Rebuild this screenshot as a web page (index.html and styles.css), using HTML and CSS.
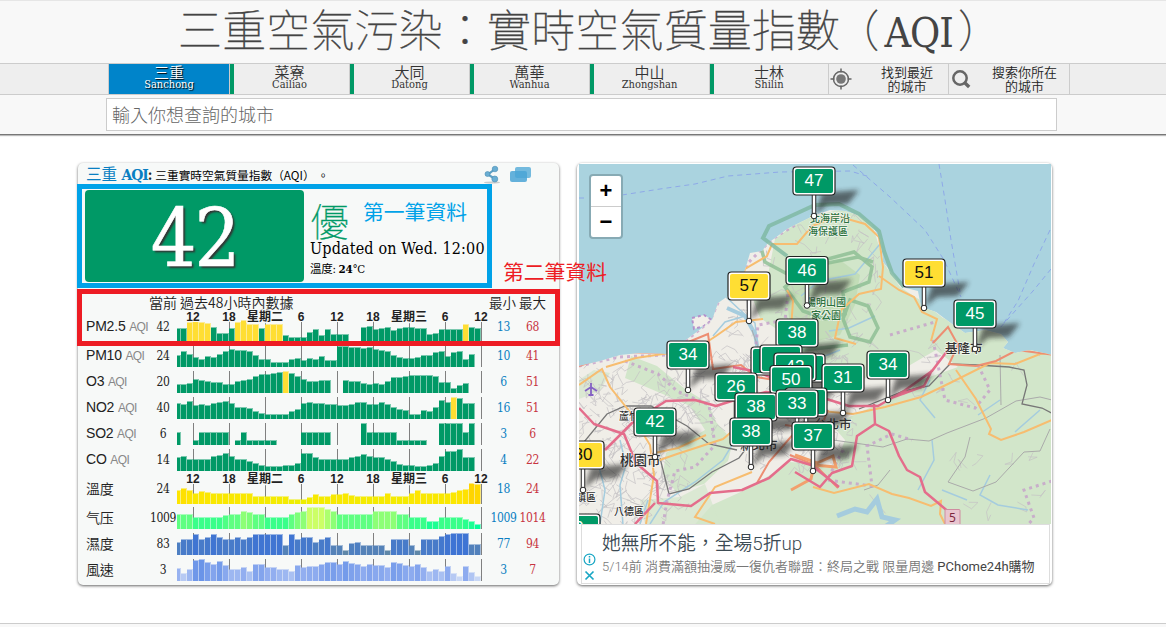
FILE: index.html
```html
<!DOCTYPE html>
<html lang="zh-Hant">
<head>
<meta charset="utf-8">
<title>三重空氣污染：實時空氣質量指數（AQI）</title>
<link rel="stylesheet" href="styles.css">
</head>
<body>
<header class="top">
  <h1 class="title">三重空氣污染：實時空氣質量指數<span class="open">（</span><span class="lat">AQI</span><span class="close">）</span></h1>
  <nav class="tabs">
    <a class="tab active"><b>三重</b><small>Sanchong</small></a>
    <a class="tab level"><b>菜寮</b><small>Cailiao</small></a>
    <a class="tab level"><b>大同</b><small>Datong</small></a>
    <a class="tab level"><b>萬華</b><small>Wanhua</small></a>
    <a class="tab level"><b>中山</b><small>Zhongshan</small></a>
    <a class="tab level"><b>士林</b><small>Shilin</small></a>
    <a class="tab tool">
      <svg width="22" height="22" viewBox="0 0 22 22"><g fill="none" stroke="#666" stroke-width="1.5"><circle cx="11" cy="11" r="7.5"/><path d="M11 0.5v4M11 17.5v4M.5 11h4M17.500 11h4"/></g><circle cx="11" cy="11" r="4.800" fill="#777"/></svg>
      <span>找到最近<br>的城市</span></a>
    <a class="tab tool last">
      <svg width="22" height="22" viewBox="0 0 22 22"><g fill="none" stroke="#666"><circle cx="10" cy="10" r="6.700" stroke-width="2.500"/><path d="M15 15l4.200 4" stroke-width="3.400"/></g></svg>
      <span>搜索你所在<br>的城市</span></a>
  </nav>
  <div class="search">輸入你想查詢的城市</div>
</header>
<main class="cards">
  <section class="card aqi">
    <div class="head"><span class="city">三重 <b>AQI</b></span><b class="colon">:</b><span class="desc">三重實時空氣質量指數（AQI） 。</span>
      <svg class="acts" width="52" height="20" viewBox="0 0 52 20"><ellipse cx="10" cy="17.500" rx="8" ry="1" fill="#c8cccd"/><path d="M13 4L6 9.500l7 4.500" fill="none" stroke="#5d9fc4" stroke-width="2.200"/><g fill="#6aaed3" stroke="#4a8db3" stroke-width=".6"><circle cx="13" cy="4" r="2.800"/><circle cx="5.500" cy="9" r="2.500"/><circle cx="12.800" cy="14" r="3"/></g><rect x="33" y="2" width="16" height="11" rx="2" fill="#73bade"/><rect x="28" y="6" width="17" height="11" rx="2" fill="#4aa5d6" fill-opacity=".85"/></svg>
    </div>
    <div class="now">
      <div class="score">42</div>
      <div class="info"><div class="grade">優</div><div class="upd">Updated on Wed. 12:00</div><div class="temp">溫度: <b>24</b>°C</div></div>
    </div>
    <div class="row hd"><span></span><span class="past">當前 過去48小時內數據</span><span class="mm">最小 最大</span></div>
    <div id="rows"></div>
    <div class="mark blue"></div><div class="note bluetext">第一筆資料</div>
    <div class="mark red"></div><div class="note redtext">第二筆資料</div>
  </section>
  <section class="card mapcard">
    <div class="mapbox">
    <svg class="map" viewBox="579 164 473 360" width="473" height="360">
      <defs>
        <clipPath id="landclip"><path d="M575 367L600 361 620 355 640 353 666 354 683 342 698 331 712 320 718 303 728 296 737 288 745 270 750 253 762 251 768 243 775 238 787 229 803 221 815 215 830 210 845 211 858 215 871 224 881 240 883 262 892 273 902 287 918 291 921 307 936 312 952 324 965 333 985 330 1001 334 1008 342 1003 348 1015 353 1030 350 1056 356V530H575Z"/></clipPath>
        <filter id="soft" x="-30%" y="-50%" width="160%" height="200%"><feGaussianBlur stdDeviation="2.600"/></filter>
      </defs>
      <rect x="579" y="164" width="473" height="360" fill="#aad3df"/>
      <g fill="none" stroke="#8ea9e8" stroke-width="1" stroke-dasharray="5 4"><path d="M579 198h6M622 195L660 189 695 184 728 176 780 172 850 171 870 177"/><path d="M853 165L890 197 925 230 944 260 961 297"/><path d="M939 164L945 200 951 240 960 292"/><path d="M1050 230L1034 264 1018 301 1002 326"/><path d="M1051 269L1033 291 999 329"/></g>
      <path d="M692 318l12-3 8 5-8 6-10 3z" fill="#f2efe9" stroke="#b491cb" stroke-width="2" stroke-dasharray="3 3"/>
      <g clip-path="url(#landclip)">
        <rect x="575" y="160" width="480" height="370" fill="#f0eee8"/>
        <g fill="#d2e6ca">
          <path d="M775 239L800 220 845 208 872 224 885 265 900 287 920 300 943 318 1000 334 1056 350V530H690L712 505 745 490 770 475 790 462 835 466 845 440 832 425 865 410 884 402 915 382 958 367 936 350 905 368 848 382 812 372 790 340 778 330 760 318 752 296 765 290Z"/>
          <path d="M631 356L657 366 685 389 708 403 716 422 733 441 728 461 704 484 676 492 663 474 666 453 705 430 690 406 665 395 625 378Z"/>
          <path d="M640 500l40-3 25-13 15 40h-75zM579 380l15-10 16 3-10 18-21 8z" opacity=".7"/>
        </g>
        <path fill="#bcd9b0" opacity=".7" d="M785 290l20-20 35-10 20 15-5 30-15 30-30 8-20-20z"/>
        <g id="streets" fill="none" stroke="#c4c1c4" stroke-width=".7"></g>
        <g fill="none" stroke="#a5ccde" stroke-width="1.500"><path d="M725 296l15 14 15 13 3 30 10 20 25 15M745 316l-20 6-12 14"/><path stroke-width="4" d="M727 308l18 8 10 18 4 22 20 12"/><path d="M620 440l6 25-6 20 3 40M596 455l9 35-5 34M648 500l-8 24M735 440l-12 20-28 22-31 20-14 22M880 244l-25 30-36 7-18 15M875 316l-26 12-20 3M930 380l-10 20 15 18M932 440l2 20-16 30M942 490l25 10M990 475l-10 20 18 10 30 5M1000 400l-22 15M1040 410l-25 22M840 350l-25 10"/><path stroke-width="5" d="M837 516l18-7 12 3 10-13 5 18 13 3-13 9"/></g>
        <g fill="none" stroke="#aaa" stroke-width="1"><path d="M833 440l50 7 24-8 22 2 18-8 39-15 30-17 24-4 12 3M970 437l-5 20-17 25 25 9 23-9 28-30 16-1 10-22M1000 355l1 50M890 470l-12 15-14 5M752 330l7 20-4 20"/></g>
        <g fill="none" stroke="#777" stroke-width="1.300"><path d="M579 448l28-34 18-8 26 0 36 20 22 18 28 6M660 458l9 36 20-5 23-17 27-14 15-20M859 409l45-18 25-5 21-22 27 1 32 2 15 3 3 15-5 19 20 4 15 8"/></g>
        <g fill="none" stroke="#c49bc9" stroke-width="3" stroke-dasharray="3 4" opacity=".75"><path d="M579 366l40-9 47-2 22-16 22-18 10-23 18-12 10-23 12-12 12-12 25-15"/><path d="M625 361l33 13 19 17 32 14 6 40-20 22-20 4-8 30-5 30-18 30"/><path d="M788 294l-3 26-27 5-3 30M843 450l-16 30 45 6-5-40 25-12 20 6M933 340l12 60 30 8 15-18-12-25M1052 481l-28 9 10 28-18 20M890 335l45-13"/></g>
        <g fill="none" stroke="#8bbd91" stroke-width="3.500" opacity=".8"><path d="M824 260l30-8 18 15-3 15-26 10 2 22-20 5-22-8-18-24 22-18z"/><path d="M780 229l-20 15 5 18 28 15 25-12 40-8 15 5"/><path d="M850 300l18 6 10 22-8 14-20-5-7-18zM790 320l14 30 44-5"/></g>
        <g fill="none" stroke="#f7bd70" stroke-width="2"><path d="M579 385l23-16 8 18 20 25 20 33 4 30-8 49M606 367l30-9 60-9 20-13 20-14 27-3M738 291l7-22 22-13 5-12 25 0 15-18 25-10 28 8 14 13 4 30-2 22-22 5-18 16-6 28 21 6M879 276l20 14 15 7 8 15 15 7-6 22M657 461l20-7 46-15 26-22 22-10 40 3 42 4 32-7 36-10 29-14 40-20 25 1 25-10 30-4M956 370l20 29 15 30-2 5 12 6 23-8 28-12M650 454l28-6 28-13M715 524l-20-7 20-30 37-15M813 487l21 6 35-9 23 10 17 4 22 8 10-5-1 13 6 12M787 290l6 11-2 28"/></g>
        <g fill="none" stroke="#ed8e72" stroke-width="2"><path d="M579 366l40-14 47 1M686 343l22-9 5 35 28-4 15 12 25 4M933 343l15-16 10 18-9 19 27 2 20-5 21-11 38 5M785 425l35 5 8-20M757 483l12-21 26-30 30-13M790 455l25 10 23 23"/><path stroke="#f2a06d" stroke-width="3" d="M795 455l22 8 16-7 3 11-22-2-3 14-20 11"/></g>
        <g fill="none" stroke="#e46d8b" stroke-width="2.500" stroke-linejoin="round"><path d="M579 408l15 16 30 10 12 29 21 18 1 22 33 3 19-13 32-3 27-12 22-19 20 6 18 14 10 8M605 450l28-28 33-21 29-1 21 6 25-8 25-6 30 3M733 367l25 5 46 20 45 14 29 0 26-15 28-20 19-25M891 398l33-12 8-16M874 404l1 20 14 7 10 25 8 14 13 7 5 15 25 21M875 424l-18 12-5 30-20 7-12 14-25-15M635 524l20-21"/></g>
      </g>
      <path fill="none" stroke="#7db8a0" stroke-width="4" opacity=".8" d="M787 256l-24-18 6-12 22-10 24-11 24-1 20 10 20 17 5 20 8 22 12 14"/>
      <g class="places"><text x="810" y="222" class="park">北海岸沿</text><text x="808" y="235" class="park">海保護區</text><text x="806" y="306" class="park">陽明山國</text><text x="811" y="319" class="park">家公園</text><text x="945" y="353">基隆市</text><text x="620" y="465" class="big">桃園市</text><text x="740" y="450">新北市</text><text x="814" y="429">台北市</text><text x="619" y="420" class="small">蘆竹區</text><text x="614" y="515" class="small">八德區</text><text x="566" y="501" class="small">平鎮區</text></g>
      <path d="M591 383v12M585 391l6-4 6 4M588.500 395h5" stroke="#8461c4" stroke-width="1.800" fill="none"/>
      <g><rect x="945" y="509.500" width="15" height="18" rx="1" fill="#e9c5cf" stroke="#cf8ca0"/><text x="952.500" y="522" text-anchor="middle" class="shield">5</text></g>
      <g id="pins"></g>
    </svg>
    <div class="zoom"><span>+</span><span>−</span></div>
    </div>
    <div class="ad">
      <svg width="13" height="30" viewBox="0 0 13 30"><g fill="none" stroke="#18a6c4" stroke-width="1.200"><circle cx="6.500" cy="6.500" r="5.400"/><path d="M2.500 18.500l8 8M10.500 18.500l-8 8" stroke-width="1.700"/></g><path d="M6.500 5.500v4.500M6.500 3v1.500" stroke="#18a6c4" stroke-width="1.500"/></svg>
      <div><div class="adtitle">她無所不能，全場5折up</div><div class="adtext">5/14前 消費滿額抽漫威一復仇者聯盟：終局之戰 限量周邊 <span>PChome24h購物</span></div></div>
    </div>
  </section>
</main>
<footer class="foot"></footer>
<script src="charts.js"></script>
</body>
</html>
```

FILE: styles.css
```css
* { box-sizing: border-box; }
body { margin: 0; height: 627px; overflow: hidden; background: #fff; color: #222; display: flex; flex-direction: column; font-family: "DejaVu Serif Condensed", "DejaVu Serif", "Noto Sans CJK TC", serif; }
body > * { flex-shrink: 0; }
.top { height: 135px; background: #f8f8f8; border-top: 1px solid #e6e6e6; border-bottom: 1px solid #777; box-shadow: 0 1px 1px #bbb; }
.title { margin: 0; height: 62px; line-height: 54px; font-size: 44px; font-weight: 100; color: #444; white-space: nowrap; padding-left: 178px; font-family: "Noto Sans CJK TC", serif; letter-spacing: .15px; -webkit-text-stroke: .35px #444; }
.title .open { margin-left: -5px; }
.title .close { margin-left: 5px; }
.title .lat { font-family: "DejaVu Serif Condensed", "DejaVu Serif", serif; font-weight: 400; font-size: 41px; letter-spacing: -1px; margin-left: 5px; -webkit-text-stroke: 0; }
.tabs { height: 32px; display: flex; background: #eee; border-top: 1px solid #ccc; border-bottom: 1px solid #ccc; padding-left: 108px; }
.tab { width: 120px; border-left: 1px solid #ccc; display: flex; flex-direction: column; align-items: center; color: #333; }
.tab b { font: 350 15px/16px "Noto Sans CJK TC", sans-serif; }
.tab small { font-size: 11px; line-height: 10px; }
.active { background: #0084ca; color: #fff; text-shadow: 1px 1px 1px #000; background-clip: padding-box; width: 121px; }
.level { position: relative; }
.level::before { content: ""; position: absolute; left: 0; top: 0; width: 4px; height: 30px; background: #009966; }
.level:nth-child(6) { width: 119px; }
.tool { flex-direction: row; align-items: center; padding-left: 1px; font: 350 13px/14px "Noto Sans CJK TC", sans-serif; text-align: center; }
.tool span { flex: 1; padding-left: 14px; color: #222; white-space: nowrap; }
.last { width: 122px; border-right: 1px solid #ccc; }
.last span { padding-left: 8px; }
.search { margin: 3px 0 0 106px; width: 951px; height: 33px; border: 1px solid #ccc; background: #fff; padding-left: 5px; font: 300 18px/31px "Noto Sans CJK TC", sans-serif; color: #666; }
.cards { display: flex; gap: 18px; padding: 28px 0 0 78px; }
.card { position: relative; height: 422px; border-radius: 5px; box-shadow: 0 1px 3px rgba(0,0,0,.6); background: #f7f9f8; }
.aqi { width: 481px; }
.head { height: 27px; padding: 0 25px 4px 8px; display: flex; align-items: center; white-space: nowrap; line-height: 22px; }
.city { color: #0a7fc2; font-size: 15.5px; }
.city b { letter-spacing: -1.1px; }
.colon { font-size: 14px; }
.desc { margin-left: 3px; font-size: 11.700px; color: #000; font-family: "Noto Sans CJK TC", sans-serif; }
.acts { margin-left: auto; }
.now { display: flex; height: 92px; padding-left: 7px; }
.score { width: 219px; border-radius: 4px; background: #009966; color: #fff; text-align: center; font-size: 80px; line-height: 97px; letter-spacing: -2px; text-shadow: 2px 2px 2px #333; -webkit-text-stroke: .6px #fff; }
.info { margin-left: 6px; color: #000; white-space: nowrap; }
.grade { font: 100 39px/54px "Noto Sans CJK TC", sans-serif; color: #009966; height: 49px; padding-top: 2px; -webkit-text-stroke: .3px #009966; }
.upd { font-size: 16px; line-height: 20px; letter-spacing: .15px; }
.temp { font-size: 11.500px; line-height: 21px; letter-spacing: -.3px; }
.row { display: grid; grid-template-columns: 66px 26px 305px 42px 18px; padding-left: 7px; align-items: end; height: 26px; white-space: nowrap; }
.hd { grid-template-columns: 64px 340px 70px; height: 33px; padding-bottom: 4px; font: 350 14px/18px "Noto Sans CJK TC", serif; }
.mm { font-size: 13.500px; }
.first { height: 26px; }
.temprow { height: 33px; }
.pressure { height: 25px; }
.label { font: 14px/22px "Liberation Sans", "Noto Sans CJK TC", sans-serif; padding-left: 1px; letter-spacing: -.2px; }
.label small { font-size: 12px; color: #888; letter-spacing: -.6px; }
.cjk { font-weight: 350; }
.val, .min, .max { font-size: 12px; line-height: 22px; text-align: center; color: #222; letter-spacing: -.4px; }
.val { margin: 0 -3px 0 -5px; }
.min { color: #0a7fc2; margin-left: 1px; }
.max { color: #c73440; margin: 0 -11px 0 -12px; }
.first > span { padding-bottom: 3px; }
.temprow > span { padding-bottom: 4px; }
.row svg { display: block; overflow: visible; position: relative; }
.hour { font: bold 12px "Liberation Sans", "Noto Sans CJK TC", sans-serif; fill: #222; text-anchor: middle; stroke: #f7f9f8; stroke-width: 2px; paint-order: stroke; }
.mark { position: absolute; border: 5px solid #00a2e8; left: -1px; top: 21px; width: 415px; height: 104px; }
.red { border-color: #ed1c24; top: 126px; width: 483px; height: 57px; }
.note { position: absolute; font: 400 20.800px/24px "Noto Sans CJK TC", sans-serif; white-space: nowrap; z-index: 3; }
.bluetext { color: #00a2e8; left: 285px; top: 36px; }
.redtext { color: #ed1c24; left: 425px; top: 96px; }
.mapcard { width: 475px; background: #fff; padding: 1px 1px 0 2px; }
.mapbox { position: relative; height: 360px; overflow: hidden; }
.map { display: block; }
.zoom { position: absolute; left: 10px; top: 10px; width: 34px; border: 2px solid #87aab4; border-radius: 4px; background: #fff; display: flex; flex-direction: column; }
.zoom span { height: 30px; font: bold 22px/29px "Liberation Sans", sans-serif; text-align: center; color: #000; }
.zoom span + span { height: 31px; border-top: 1px solid #ccc; }
.places text { font: 500 12.500px "Noto Sans CJK TC", sans-serif; fill: #333; stroke: #fff; stroke-width: 1.500px; stroke-opacity: .7; paint-order: stroke; }
.places .park { font-size: 10px; fill: #2c713e; }
.places .small { font-size: 10px; }
.places .big { font-size: 13.500px; }
.shield { font: 12px "Noto Sans", sans-serif; fill: #7b273d; }
.pin { font: 17px "Liberation Sans", sans-serif; text-anchor: middle; fill: #fff; }
.dark { fill: #111; }
.ad { height: 60px; border: 1px solid #ddd; margin: 0 1px 0 2px; display: flex; gap: 6px; padding-left: 1px; white-space: nowrap; }
.ad svg { margin-top: 28px; }
.adtitle { font: 350 18.800px/22px Roboto, "Noto Sans CJK TC", sans-serif; color: #3c4b54; margin-top: 8px; }
.adtext { font: 350 13px/22px Roboto, "Noto Sans CJK TC", sans-serif; color: #777; margin-top: 1px; }
.adtext span { color: #444; font-weight: 400; }
.foot { margin-top: 38px; height: 4px; border-top: 1px solid #ccc; background: #f8f8f8; }
```

FILE: charts.js
```js
// Each series holds 51 bar heights; zero leaves a gap.
const rows = [
  {n:'PM2.5', aqi:1, v:42, a:13, b:68, cls:'first', hours:24, hot:[2,3,4,5,10,11,12,13,15,16,17,48],
   d:[13,13,19,20,19,18,14,8,8,13,19,21,17,17,13,17,17,17,6,4,4,4,9,12,6,12,7,7,7,0,0,14,15,12,13,14,11,13,14,14,13,13,7,8,12,12,12,12,17,14,13]},
  {n:'PM10', aqi:1, v:24, a:10, b:41, d:[12,16,13,10,8,11,10,13,16,18,17,17,16,12,8,8,5,5,5,8,9,7,9,8,11,7,7,21,21,20,20,19,20,18,17,16,12,10,9,9,10,12,12,15,16,11,15,16,8,13]},
  {n:'O3', aqi:1, v:20, a:6, b:51, hot:[18], d:[9,9,10,14,13,12,11,11,9,9,12,13,14,17,19,19,20,21,22,20,17,14,12,12,13,13,0,0,13,12,12,10,9,10,9,12,16,16,17,18,18,18,18,17,11,11,5,8,10]},
  {n:'NO2', aqi:1, v:40, a:16, b:51, hot:[46], d:[16,15,18,14,15,14,16,17,18,16,12,12,11,8,6,5,5,5,5,8,10,16,17,16,16,15,15,14,14,15,17,17,15,15,17,15,12,10,9,5,5,9,8,12,19,17,22,21,16,16]},
  {n:'SO2', aqi:1, v:6, a:3, b:6, d:[13,0,0,5,13,13,13,13,13,0,5,13,5,5,5,5,5,0,0,0,0,13,13,13,13,13,0,0,0,0,0,22,13,13,13,13,13,5,5,5,5,5,0,0,22,22,22,22,13,22]},
  {n:'CO', aqi:1, v:14, a:4, b:22, d:[14,15,12,12,12,12,15,16,18,15,12,12,10,8,6,5,5,5,6,6,8,18,18,14,12,12,12,12,12,14,15,17,15,14,14,12,10,7,6,6,5,5,6,8,15,20,20,22,14,14]},
  {n:'溫度', v:24, a:18, b:24, cls:'temprow', hours:25, ramp:[[238,238,0],[254,230,0],[255,210,0]],
   d:[14,16,14,11,13,12,11,11,11,11,11,11,11,8,8,8,8,8,8,5,5,5,7,10,8,8,10,10,11,9,8,8,8,8,8,11,8,8,8,11,14,11,11,11,11,11,12,14,15,21,20]},
  {n:'气压', v:1009, a:1009, b:1014, cls:'pressure', ramp:[[0,255,153],[70,255,135],[204,255,102]],
   d:[15,15,15,12,12,12,12,12,14,15,15,18,17,15,15,12,12,12,12,15,17,18,22,22,22,20,18,15,15,15,15,15,15,18,18,18,18,15,15,12,12,12,8,8,12,12,12,12,10,8,5]},
  {n:'濕度', v:83, a:77, b:94, ramp:[[95,135,168],[76,126,196],[62,116,212]],
   d:[13,16,16,21,16,18,21,18,16,16,18,16,18,21,21,21,21,21,10,21,16,18,18,13,16,18,10,10,5,12,13,10,10,10,10,5,16,16,16,10,5,16,16,16,19,21,22,22,22,11,11]},
  {n:'風速', v:3, a:3, b:7, ramp:[[200,215,245],[148,176,240],[106,148,232]],
   d:[13,8,12,21,22,19,17,20,16,12,12,14,10,17,17,14,14,12,12,10,16,14,15,15,17,19,19,17,20,18,17,15,17,16,16,14,19,18,16,15,17,14,10,12,10,15,8,5,15,9,5]}
];
const hourNames = ['12','18','星期二','6','12','18','星期三','6','12'];

function mix(ramp, h) {
  const t = Math.max(0, Math.min(1, (h - 5) / 17)) * 2;
  const i = t < 1 ? 0 : 1, f = t - i;
  return 'rgb(' + ramp[i].map((c, k) => Math.round(c + (ramp[i + 1][k] - c) * f)) + ')';
}

document.getElementById('rows').innerHTML = rows.map(r => {
  let s = '';
  for (let i = 0; i < 9; i++) s += `<rect x="${16 + i * 36}" width="1" height="22" fill="#808080"/>`;
  r.d.forEach((h, i) => {
    if (!h) return;
    const c = r.ramp ? mix(r.ramp, h) : (r.hot || []).includes(i) ? '#ffde33' : '#009966';
    const x = Math.max(0, 6 * i - 2), w = i ? 6 : 4;
    s += `<rect x="${x}" y="${22 - h}" width="${w}" height="${h}" fill="${c}" fill-opacity=".5"/><rect x="${x}" y="${23 - h}" width="${w - 1}" height="${h - 1}" fill="${c}"/>`;
  });
  if (r.hours) hourNames.forEach((t, i) => s += `<text class="hour" x="${16 + i * 36}" y="${26 - r.hours}">${t}</text>`);
  return `<div class="row ${r.cls || ''}"><span class="label ${r.aqi ? '' : 'cjk'}">${r.n}${r.aqi ? ' <small>AQI</small>' : ''}</span><span class="val">${r.v}</span><svg width="305" height="22">${s}</svg><span class="min">${r.a}</span><span class="max">${r.b}</span></div>`;
}).join('');

// Minor streets: denser inside built-up areas.
let seed = 11;
const rnd = () => (seed = (seed * 16807) % 2147483647) / 2147483647;
let streets = '';
function mesh(x, y, w, h, n, len) {
  for (let i = 0; i < n; i++) {
    streets += `M${(x + rnd() * w).toFixed(1)} ${(y + rnd() * h).toFixed(1)}`;
    for (let k = 0; k < 3; k++) streets += `l${((rnd() - .5) * len).toFixed(1)} ${((rnd() - .5) * len).toFixed(1)}`;
  }
}
mesh(579, 360, 100, 164, 150, 22);
mesh(670, 350, 70, 80, 40, 20);
mesh(740, 350, 110, 115, 200, 15);
mesh(730, 220, 150, 130, 60, 20);
mesh(850, 330, 190, 180, 25, 20);
document.getElementById('streets').innerHTML = `<path d="${streets}"/>`;

// Station pins, back to front.
const pins = [[814,181,47],[807,270.5,46],[924,273,51],[749,286,57],[975,314,45],[797,333,38],[688,355,34],[772,361,''],[781,359,''],[804,368,''],[795,367,42],[888,365,34],[843,378,31],[736,387,26],[791,379.5,50],[806,402,''],[756,407,38],[797,404,33],[655,422,42],[751,432,38],[813,436,37],[583,455,80],[579,528,9]];
document.getElementById('pins').innerHTML = '<g filter="url(#soft)" fill="#222" opacity=".62">' + pins.map(([x, y]) => `<path d="M${x + 1} ${y + 34}L${x + 8} ${y + 12} ${x + 45} ${y + 9} ${x + 34} ${y + 23} ${x + 13} ${y + 24}Z"/>`).join('') + '</g>' + pins.map(([x, y, t]) => {
  const warn = t > 50;
  return `<path d="M${x} ${y + 14}v20" stroke="#222" stroke-width="4.500"/><path d="M${x} ${y + 14}v20" stroke="#fff" stroke-width="2.500"/><circle cx="${x}" cy="${y + 35}" r="2.800" fill="#fff" stroke="#222"/><rect x="${x - 21}" y="${y - 14}" width="42" height="28" rx="3.500" fill="#fff" stroke="#222" stroke-width="1.200"/><rect x="${x - 19}" y="${y - 12}" width="38" height="24" rx="2" fill="${warn ? '#ffde33' : '#009966'}"/><text class="pin ${warn ? 'dark' : ''}" x="${x}" y="${y + 5}">${t}</text>`;
}).join('');
```
